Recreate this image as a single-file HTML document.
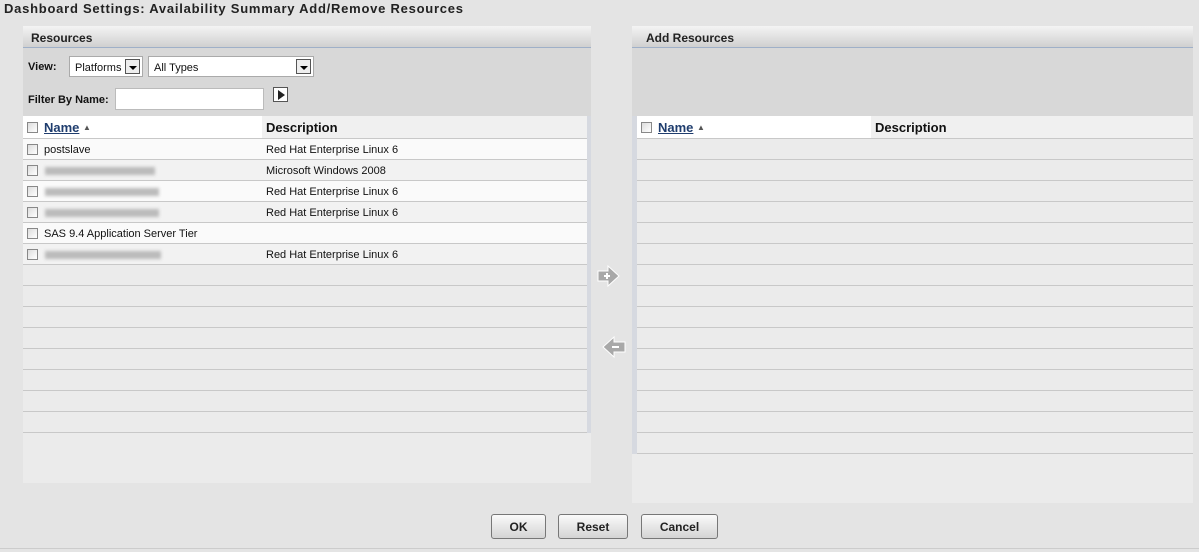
<!DOCTYPE html>
<html><head><style>
*{margin:0;padding:0;box-sizing:border-box}
body{width:1199px;height:552px;background:#e4e4e4;font-family:"Liberation Sans",sans-serif;position:relative;overflow:hidden;font-size:11px;color:#111}
.a{position:absolute}
.title{left:4px;top:1px;font-size:13px;font-weight:bold;color:#222;letter-spacing:.75px}
.hdr{height:22px;background:linear-gradient(#f4f4f4,#d0d0d0);font-weight:bold;font-size:12px;padding:5px 0 0 8px;color:#222;border-bottom:1px solid #9fb0c8}
.tb{background:#d8d8d8}
.row{position:absolute;left:0;height:21px;border-bottom:1px solid #c8c8c8;background:#ebebeb}
.cb{position:absolute;left:4px;top:5px;width:11px;height:11px;border:1px solid #888;background:linear-gradient(135deg,#ddd,#fff)}
.t{position:absolute;top:5px;font-size:11px}
.blur{position:absolute;top:7px;height:8px;background:#bbb;filter:blur(1.5px)}
.sel{position:absolute;background:#fff;border:1px solid #aaa;height:21px;font-size:11px;padding:5px 0 0 5px}
.dd{position:absolute;right:2px;top:2px;width:15px;height:15px;border:1px solid #555;background:#eee}
.dd:after{content:"";position:absolute;left:3px;top:6px;border-left:4px solid transparent;border-right:4px solid transparent;border-top:4px solid #000}
.btn{position:absolute;top:514px;height:25px;border:1px solid #777;border-radius:3px;background:linear-gradient(#fafafa,#d4d4d4);font-weight:bold;font-size:12px;text-align:center;padding-top:5px;color:#222}
.hd{position:absolute;top:4px;font-weight:bold;font-size:13px}
</style></head><body>
<div class="a title">Dashboard Settings: Availability Summary Add/Remove Resources</div>

<!-- left panel -->
<div class="a" style="left:23px;top:26px;width:568px;height:457px;background:#ebebeb">
 <div class="hdr">Resources</div>
 <div class="a tb" style="left:0;top:22px;width:568px;height:68px">
  <div class="a" style="left:5px;top:13px;font-weight:bold;font-size:11px">View:</div>
  <div class="sel" style="left:46px;top:8px;width:74px">Platforms<div class="dd"></div></div>
  <div class="sel" style="left:125px;top:8px;width:166px">All Types<div class="dd"></div></div>
  <div class="a" style="left:5px;top:46px;font-weight:bold;font-size:11px">Filter By Name:</div>
  <div class="a" style="left:92px;top:40px;width:149px;height:22px;background:#fff;border:1px solid #bbb"></div>
  <div class="a" style="left:250px;top:39px;width:15px;height:15px;border:1px solid #555;background:#fff"><div class="a" style="left:4px;top:2px;border-top:5px solid transparent;border-bottom:5px solid transparent;border-left:7px solid #222"></div></div>
 </div>
 <div class="a" style="left:0;top:90px;width:564px;height:23px;background:#fff;border-bottom:1px solid #c8c8c8">
  <div class="cb" style="top:6px"></div>
  <div class="hd" style="left:21px;color:#1f3d6e;text-decoration:underline">Name</div><div class="a" style="left:60px;top:7px;font-size:8px;color:#555">▲</div>
  <div class="a" style="left:239px;top:0;width:325px;height:22px;background:#f0f0f0"></div>
  <div class="hd" style="left:243px">Description</div>
 </div>
 <div class="a" style="left:564px;top:90px;width:4px;height:317px;background:#d6d9e0"></div>
 <div class="a" style="left:0;top:113px;width:564px">
  <div class="row" style="top:0;width:564px;background:#fafafa"><div class="cb"></div><div class="t" style="left:21px">postslave</div><div class="t" style="left:243px">Red Hat Enterprise Linux 6</div></div>
  <div class="row" style="top:21px;width:564px;background:#f2f2f2"><div class="cb"></div><div class="blur" style="left:22px;width:110px"></div><div class="t" style="left:243px">Microsoft Windows 2008</div></div>
  <div class="row" style="top:42px;width:564px;background:#fafafa"><div class="cb"></div><div class="blur" style="left:22px;width:114px"></div><div class="t" style="left:243px">Red Hat Enterprise Linux 6</div></div>
  <div class="row" style="top:63px;width:564px;background:#f2f2f2"><div class="cb"></div><div class="blur" style="left:22px;width:114px"></div><div class="t" style="left:243px">Red Hat Enterprise Linux 6</div></div>
  <div class="row" style="top:84px;width:564px;background:#fafafa"><div class="cb"></div><div class="t" style="left:21px">SAS 9.4 Application Server Tier</div></div>
  <div class="row" style="top:105px;width:564px;background:#f2f2f2"><div class="cb"></div><div class="blur" style="left:22px;width:116px"></div><div class="t" style="left:243px">Red Hat Enterprise Linux 6</div></div>
  <div class="row" style="top:126px;width:564px"></div>
  <div class="row" style="top:147px;width:564px"></div>
  <div class="row" style="top:168px;width:564px"></div>
  <div class="row" style="top:189px;width:564px"></div>
  <div class="row" style="top:210px;width:564px"></div>
  <div class="row" style="top:231px;width:564px"></div>
  <div class="row" style="top:252px;width:564px"></div>
  <div class="row" style="top:273px;width:564px"></div>
 </div>
</div>

<!-- arrows -->
<svg class="a" style="left:596px;top:264px" width="26" height="24"><path d="M2 7H12V2L23 12L12 22V17H2Z" fill="#a8a8a8" stroke="#fff" stroke-width="1"/><path d="M8 12h6M11 9v6" stroke="#fff" stroke-width="2"/></svg>
<svg class="a" style="left:601px;top:335px" width="26" height="24"><path d="M24 7H13V2L2 12L13 22V17H24Z" fill="#a8a8a8" stroke="#fff" stroke-width="1"/><path d="M11 12h7" stroke="#fff" stroke-width="2"/></svg>

<!-- right panel -->
<div class="a" style="left:632px;top:26px;width:561px;height:477px;background:#ebebeb">
 <div class="hdr" style="padding-left:14px">Add Resources</div>
 <div class="a tb" style="left:0;top:22px;width:561px;height:68px"></div>
 <div class="a" style="left:0;top:90px;width:5px;height:338px;background:#d6d9e0"></div>
 <div class="a" style="left:5px;top:90px;width:556px;height:23px;background:#fff;border-bottom:1px solid #c8c8c8">
  <div class="cb" style="top:6px"></div>
  <div class="hd" style="left:21px;color:#1f3d6e;text-decoration:underline">Name</div><div class="a" style="left:60px;top:7px;font-size:8px;color:#555">▲</div>
  <div class="a" style="left:234px;top:0;width:322px;height:22px;background:#f0f0f0"></div>
  <div class="hd" style="left:238px">Description</div>
 </div>
 <div class="a" style="left:5px;top:113px;width:556px">
  <div class="row" style="top:0;width:556px"></div><div class="row" style="top:21px;width:556px"></div>
  <div class="row" style="top:42px;width:556px"></div><div class="row" style="top:63px;width:556px"></div>
  <div class="row" style="top:84px;width:556px"></div><div class="row" style="top:105px;width:556px"></div>
  <div class="row" style="top:126px;width:556px"></div><div class="row" style="top:147px;width:556px"></div>
  <div class="row" style="top:168px;width:556px"></div><div class="row" style="top:189px;width:556px"></div>
  <div class="row" style="top:210px;width:556px"></div><div class="row" style="top:231px;width:556px"></div>
  <div class="row" style="top:252px;width:556px"></div><div class="row" style="top:273px;width:556px"></div>
  <div class="row" style="top:294px;width:556px"></div>
 </div>
</div>

<div class="btn" style="left:491px;width:55px">OK</div>
<div class="btn" style="left:558px;width:70px">Reset</div>
<div class="btn" style="left:641px;width:77px">Cancel</div>
<div class="a" style="left:0;top:548px;width:1199px;height:1px;background:#ccc"></div>
</body></html>
